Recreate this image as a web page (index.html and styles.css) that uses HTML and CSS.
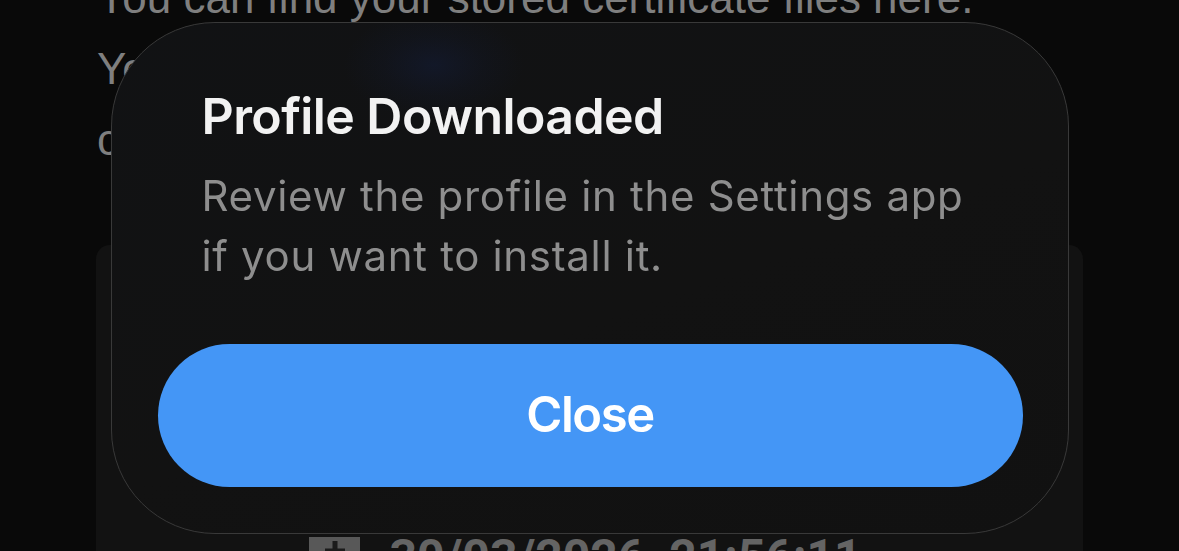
FILE: index.html
```html
<!DOCTYPE html>
<html lang="en">
<head>
<meta charset="utf-8">
<title>Profile Downloaded</title>
<link rel="stylesheet" href="styles.css">
</head>
<body>
  <main class="page">
    <p class="intro">You can find your stored certificate files here.<br>You can open them in the Settings app to install<br>certificates on this device or share them.</p>
    <section class="card">
      <div class="entry">
        <span class="entry-icon">
          <svg width="24" height="24" viewBox="0 0 24 24" aria-hidden="true">
            <rect x="9.5" y="2" width="5" height="20" fill="#1b1b1b"/>
            <rect x="2" y="9.5" width="20" height="5" fill="#1b1b1b"/>
          </svg>
        </span>
        <span class="entry-stamp">30/03/2026&nbsp;&nbsp;21:56:11</span>
      </div>
    </section>
  </main>

  <div class="overlay">
    <div class="dialog" role="alertdialog" aria-labelledby="dlg-title">
      <h2 class="dialog-title" id="dlg-title">Profile Downloaded</h2>
      <p class="dialog-text">Review the profile in the Settings app<br>if you want to install it.</p>
      <button class="dialog-button" type="button">Close</button>
    </div>
  </div>
</body>
</html>
```

FILE: styles.css
```css
* {
  box-sizing: border-box;
}

html, body {
  margin: 0;
  padding: 0;
  height: 100%;
  overflow: hidden;
}

body {
  background: #090909;
  font-family: "Liberation Sans", Arial, sans-serif;
}

.page {
  padding: 0 96px;
}

.intro {
  margin: -38px 0 0 1px;
  font-size: 44px;
  line-height: 71px;
  color: #7f7f7f;
  white-space: nowrap;
}

.card {
  margin-top: 70px;
  height: 320px;
  background: #121212;
  border-radius: 14px;
  padding-top: 292px;
}

.entry {
  display: flex;
  justify-content: center;
  align-items: flex-start;
  gap: 29px;
  padding-right: 8px;
}

.entry-icon {
  width: 51px;
  height: 51px;
  background: #585858;
  display: flex;
  justify-content: center;
  padding-top: 2px;
}

.entry-stamp {
  font-family: "Roboto", "Liberation Sans", sans-serif;
  font-weight: 700;
  font-size: 48px;
  line-height: 48px;
  margin-top: -4px;
  color: #646464;
  white-space: pre;
}

.overlay {
  position: fixed;
  inset: 0;
  display: flex;
  justify-content: center;
  align-items: flex-start;
  padding-top: 22px;
  padding-left: 1px;
}

.dialog {
  width: 958px;
  height: 512px;
  border: 1.5px solid #393939;
  border-radius: 104px;
  background:
    radial-gradient(ellipse 90px 55px at 322px 42px, rgba(20, 32, 68, 0.42), rgba(20, 32, 68, 0.15) 55%, rgba(20, 32, 68, 0) 100%),
    linear-gradient(160deg, #111214 0%, #121212 55%, #111111 100%);
  padding: 62.5px 45.5px 0;
  font-family: "Inter", "Noto Sans", sans-serif;
  display: flex;
  flex-direction: column;
}

.dialog-title {
  margin: 0;
  padding-left: 44px;
  font-size: 50px;
  line-height: 60px;
  font-weight: 600;
  color: #f2f2f2;
  letter-spacing: -0.58px;
}

.dialog-text {
  margin: 20.4px 0 0;
  padding-left: 44px;
  font-size: 42px;
  line-height: 60px;
  font-weight: 400;
  color: #8e8e8e;
  letter-spacing: 0.68px;
}

.dialog-button {
  margin-top: 58.6px;
  height: 143px;
  width: 100%;
  border: 0;
  border-radius: 72px;
  background: #4496f6;
  color: #ffffff;
  font-family: "Inter", "Noto Sans", sans-serif;
  font-size: 49px;
  font-weight: 600;
  letter-spacing: -1.4px;
  padding: 0 0 2px;
  cursor: pointer;
}
```
